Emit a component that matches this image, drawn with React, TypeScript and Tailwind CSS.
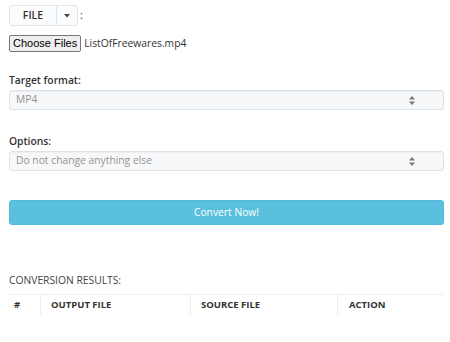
const font = { fontFamily: "'Open Sans', 'Noto Sans', sans-serif" };

function SelectBox({ value }: { value: string }) {
  return (
    <div className="flex h-[20px] items-center justify-between rounded-[3px] border border-[#dde3ea] bg-[#f7f8f9] pl-[6px] pr-[28px] text-[10.3px] text-[#939393] shadow-[inset_0_1px_1px_rgba(0,0,0,0.04)]">
      <span>{value}</span>
      <svg width="6" height="9" viewBox="0 0 6 9">
        <path d="M3 0 L6 3.5 H0 Z" fill="#777" />
        <path d="M3 9 L6 5.5 H0 Z" fill="#777" />
      </svg>
    </div>
  );
}

export default function App() {
  return (
    <div className="w-[450px] h-[342px] bg-white pl-[9px] pr-[6px] text-[#333]" style={font}>
      {/* file dropdown */}
      <div className="flex items-center pt-[5px]">
        <div className="flex h-[21px] rounded-[3px] border border-[#e1e6ea] bg-[#fbfcfd] text-[10.5px] text-[#333]">
          <div className="flex w-[47px] items-center justify-center border-r border-[#e1e6ea] font-semibold">FILE</div>
          <div className="flex w-[20px] items-center justify-center">
            <svg width="6" height="4" viewBox="0 0 6 4">
              <path d="M0 0 H6 L3 3.5 Z" fill="#444" />
            </svg>
          </div>
        </div>
        <span className="ml-[2px] text-[11px]">:</span>
      </div>

      {/* file input */}
      <div className="mt-[9px] flex items-center">
        <div
          className="flex h-[17px] items-center justify-center whitespace-nowrap rounded-[2px] border border-[#767676] bg-[#efefef] px-[3px] text-[11px] text-black"
          style={{ fontFamily: "'Liberation Sans', Arial, sans-serif" }}
        >
          Choose Files
        </div>
        <span className="ml-[3px] text-[10.3px] text-[#333]">ListOfFreewares.mp4</span>
      </div>

      {/* target format */}
      <div className="mt-[20px] text-[10.3px] font-semibold leading-[16px]">Target format:</div>
      <div className="mt-[2px]">
        <SelectBox value="MP4" />
      </div>

      {/* options */}
      <div className="mt-[23px] text-[10.3px] font-semibold leading-[16px]">Options:</div>
      <div className="mt-[2px]">
        <SelectBox value="Do not change anything else" />
      </div>

      {/* convert */}
      <button className="mt-[29px] flex h-[25px] w-full items-center justify-center rounded-[3px] border border-[#52bbdb] bg-[#5bc0de] text-[10.3px] text-white">
        Convert Now!
      </button>

      {/* results */}
      <div className="mt-[47px] text-[10.3px] leading-[16px] text-[#444]">CONVERSION RESULTS:</div>
      <div className="mt-[6px] flex border-t border-[#edf0f3] text-[9.5px] font-bold text-[#333]">
        <div className="flex h-[20px] w-[32px] items-center border-r border-[#edf0f3] pl-[5px]">#</div>
        <div className="flex h-[20px] w-[150px] items-center border-r border-[#edf0f3] pl-[10px]">OUTPUT FILE</div>
        <div className="flex h-[20px] w-[147px] items-center border-r border-[#edf0f3] pl-[10px]">SOURCE FILE</div>
        <div className="flex h-[20px] flex-1 items-center pl-[11px]">ACTION</div>
      </div>
    </div>
  );
}
